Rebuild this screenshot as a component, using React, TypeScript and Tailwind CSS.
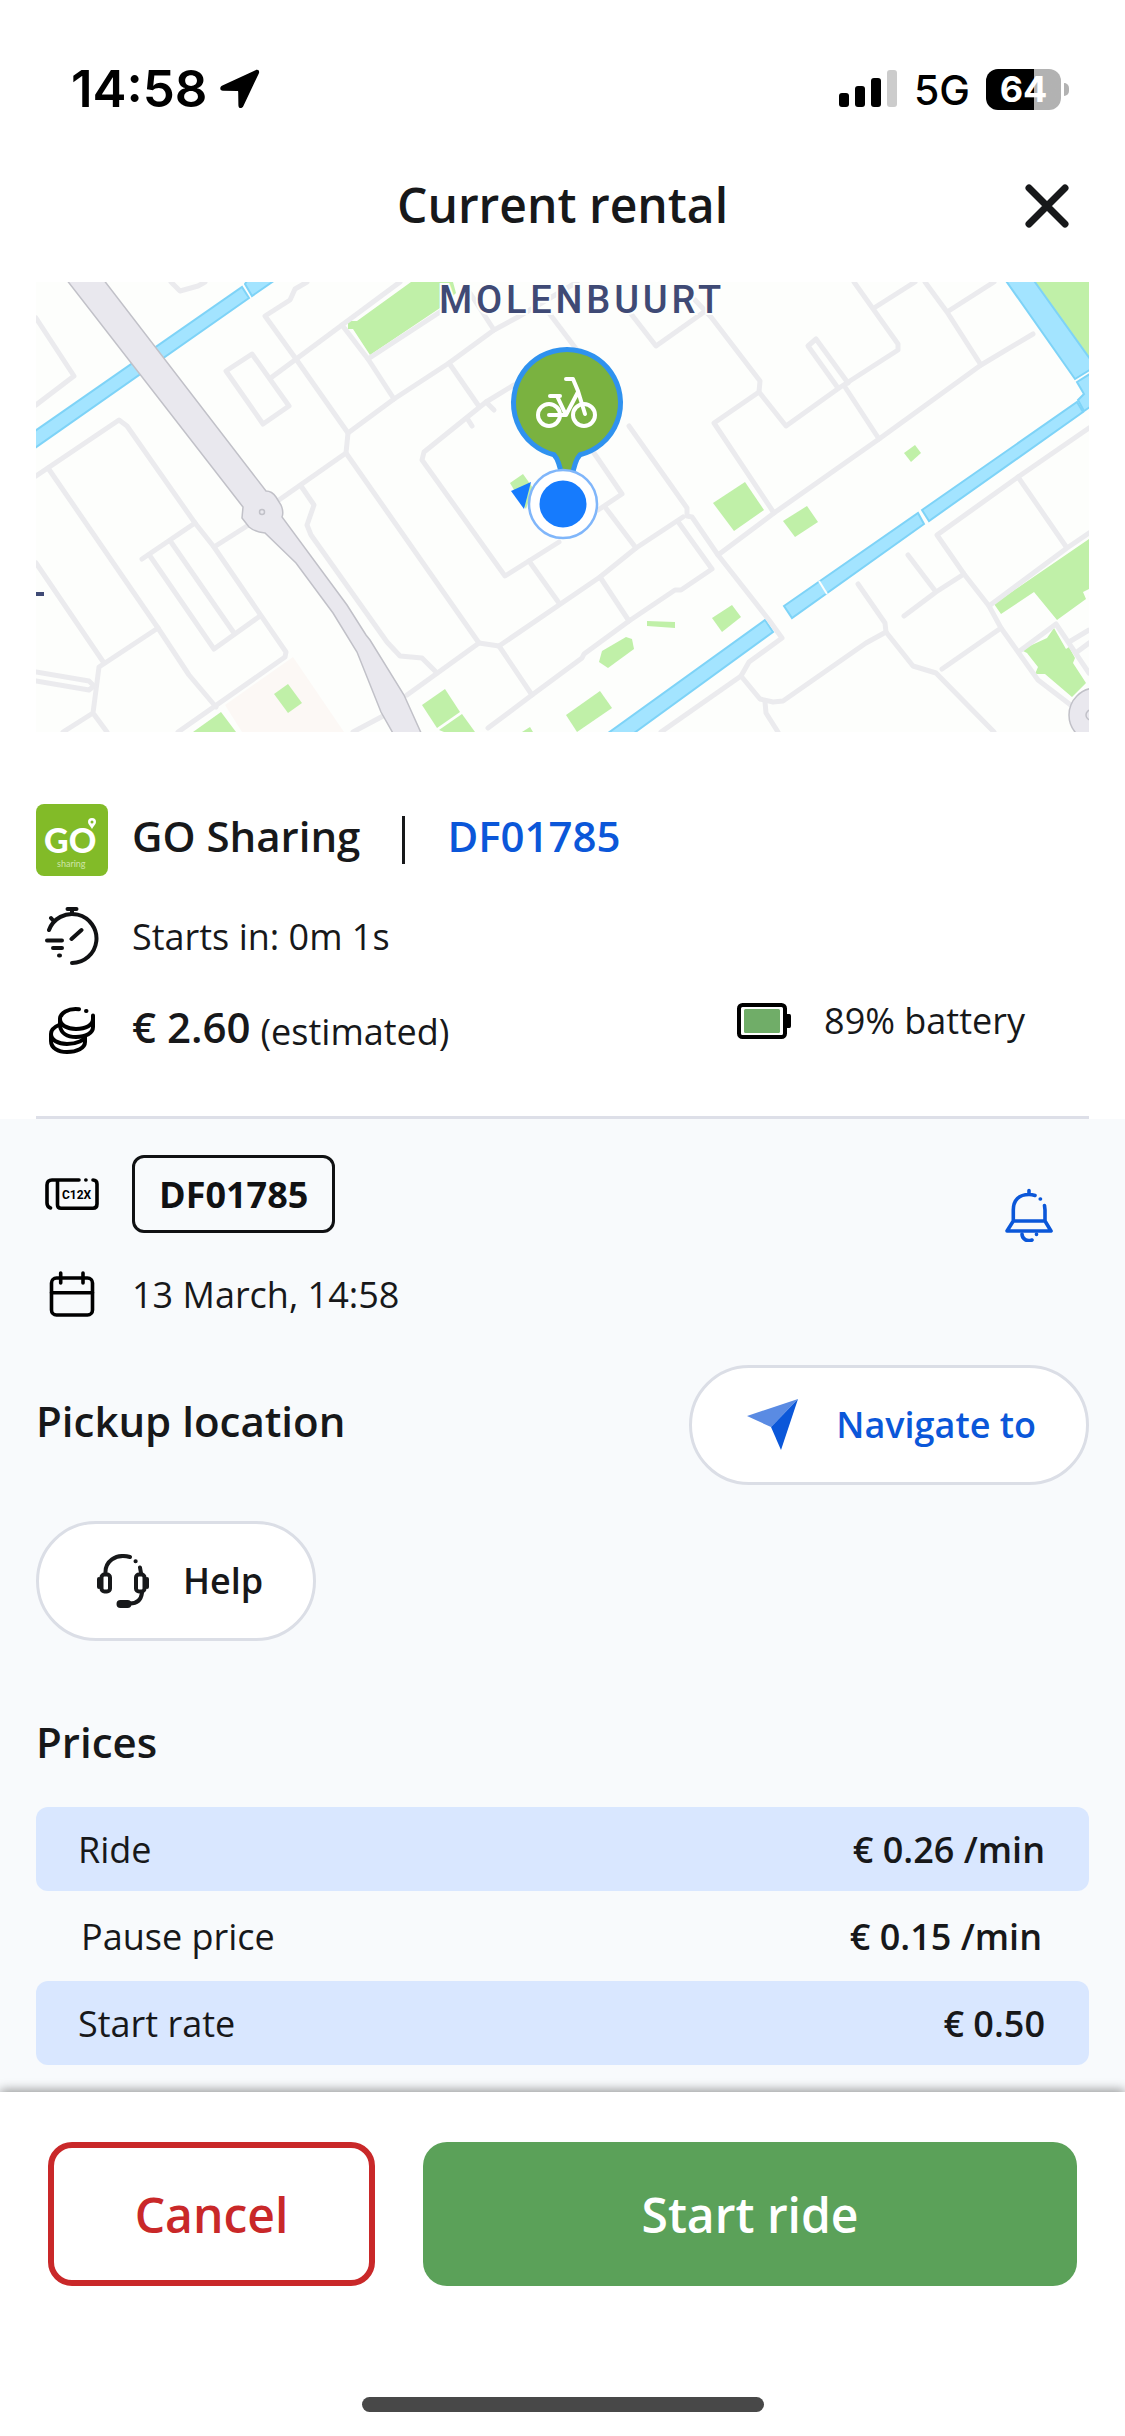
import React from 'react';

const prices = [
  { name: 'Ride', value: '€ 0.26 /min', highlighted: true },
  { name: 'Pause price', value: '€ 0.15 /min', highlighted: false },
  { name: 'Start rate', value: '€ 0.50', highlighted: true },
];

const parks = [
  '375,0 417,0 420,11 404,26 334,73 317,47 312,47 312,39 321,39',
  '252,402 266,421 252,431 238,412',
  '185,430 200,450 157,450',
  '409,407 424,430 401,446 386,423',
  '426,432 439,450 408,450 403,448',
  '494,445 497,450 486,450',
  '709,200 728,228 698,249 677,221',
  '771,224 782,240 759,255 747,239',
  '879,163 885,171 875,180 868,171',
  '696,323 705,335 686,350 676,336',
  '611,339 639,340 639,346 611,344',
  '590,355 596,357 598,367 572,386 563,380 566,369',
  '564,409 576,426 541,450 530,433',
  '998,0 1053,0 1053,76',
  '1053,257 1053,307 1047,310 1050,317 1021,338 998,310 965,332 958,322',
  '1018,346 1030,367 1033,365 1039,376 1037,381 1050,401 1036,415 1009,392 999,392 1002,385 991,371 985,368 1011,356',
  '474,201 487,192 497,206 490,227 484,218',
];

const canals = [
  '-4,151 206,5 213,16 -4,168',
  '209,2 213,-4 242,-4 216,14',
  '729,338 737,350 594,454 568,454',
  '748,324 882,231 888,242 756,336',
  '886,228 1041,120 1047,130 893,239',
  '1042,118 1048,112 1041,100 1057,90 1057,123 1048,129',
  '968,-4 996,-4 1057,81 1057,86 1039,97',
];

const streets = [
  'M0 36 38 94 0 123',
  'M135 0 144 9 162 4 169 0',
  'M0 194 83 138 91 144 159 241 178 265 250 370 249 375 142 450',
  'M12 186 122 346 153 393 180 425',
  'M159 241 106 277',
  'M114 274 178 367 224 334',
  'M135 260 198 351',
  'M178 265 211 244',
  'M0 281 68 381',
  'M122 346 63 385 57 431 27 450M57 431 71 450',
  'M0 390 53 399 58 404 53 408 0 399',
  'M271 0 259 7 254 18 229 34 260 77 312 151 310 171 443 361 371 413',
  'M364 0 306 43 236 95',
  'M216 72 190 89 227 142 253 124Z',
  'M306 43 332 77 358 117',
  'M332 77 404 30',
  'M312 151 358 117 413 81 458 48 482 35 541 0',
  'M458 48 434 11',
  'M413 81 442 123',
  'M478 103 450 120 388 170 386 178 469 294 523 260',
  'M450 120 458 128M431 136 436 144',
  'M310 171 243 218',
  'M265 204 278 223 271 243 275 253 351 360 364 374 386 376 401 391',
  'M443 361 463 364 564 295 600 266 647 235',
  'M463 364 496 413',
  'M452 446 496 413 546 376 548 372 593 339 639 308 645 308 676 287 643 241',
  'M493 279 523 321',
  'M513 31 541 68',
  'M317 450 349 433',
  'M592 28 620 64 668 30',
  'M659 18 675 35 724 99 723 110 750 144 803 106 862 68 862 62 818 0',
  'M723 110 678 141 738 231',
  'M802 106 772 64 780 57 812 101',
  'M809 105 843 157',
  'M838 26 879 0',
  'M889 0 911 30 945 83M911 30 958 0',
  'M997 52 945 83 843 157 738 231 682 273',
  'M593 144 651 226 651 234 656 235 682 273 733 338 746 356 713 380 705 394 724 417 737 420 747 419 830 361 850 350',
  'M705 394 625 450',
  'M729 420 730 431 742 450',
  'M822 302 849 341 850 350 877 384 900 391 958 450',
  'M872 273 900 310M868 334 900 310 928 292',
  'M1053 146 982 195 901 253 928 292 953 324 965 346 1002 398 1036 424',
  'M982 195 1031 266M1053 251 1031 266 953 324',
  'M965 346 906 387',
  'M985 368 1020 342 1053 391M1033 360 1053 348M1041 370 1053 361',
  'M558 171 586 212 562 228M569 225 600 266',
  'M564 295 593 339',
];

export default function App() {
  return (
    <div className="flex min-h-screen flex-col bg-white font-['Open_Sans','Noto_Sans',sans-serif] text-[36px] leading-[48px] text-[#17181a]">
      <StatusBar />

      {/* Title bar */}
      <header className="grid h-[157px] grid-cols-[1fr_auto_1fr] items-center px-9">
        <h1 className="col-start-2 pt-[2px] text-[48px] leading-[64px] font-semibold">Current rental</h1>
        <button type="button" aria-label="Close" className="mr-5 justify-self-end pt-1">
          <svg width="44" height="44" viewBox="0 0 44 44" fill="none" stroke="currentColor" strokeWidth="7" strokeLinecap="round">
            <path d="M4 4 40 40M40 4 4 40" />
          </svg>
        </button>
      </header>

      <main className="flex flex-1 flex-col">
        <section className="px-9">
          <RentalMap />

          {/* Provider */}
          <div className="mt-[72px] flex items-center">
            <GoLogo />
            <h2 className="ml-6 pb-2 text-[42px] leading-[60px] font-semibold">GO Sharing</h2>
            <div className="mx-[42px] h-12 w-[3px] bg-[#17181a]" />
            <a href="#vehicle" className="pb-2 text-[42px] leading-[60px] font-semibold text-[#0b57d9]">DF01785</a>
          </div>

          <div className="mt-[30px] flex h-[60px] items-center gap-6">
            <IconSlot><StopwatchIcon /></IconSlot>
            <p className="pt-[2px]">Starts in: 0m 1s</p>
          </div>

          <div className="mt-[35px] flex h-[60px] items-center gap-6">
            <IconSlot><CoinsIcon /></IconSlot>
            <p className="flex items-center gap-[10px]">
              <strong className="pb-2 text-[42px] leading-[60px] font-semibold">€ 2.60</strong>
              <span className="pt-[2px]">(estimated)</span>
            </p>
            <p className="mr-16 ml-auto flex h-10 items-center gap-8 self-start">
              <BatteryIcon />
              <span>89% battery</span>
            </p>
          </div>

          <hr className="mt-[55px] border-t-[3px] border-[#dddfe8]" />
        </section>

        <section className="flex-1 bg-[#f8fafc] px-9 pt-9 pb-6">
          {/* Reservation */}
          <div className="flex items-start justify-between">
            <div className="flex flex-col gap-9">
              <div className="flex items-center gap-6">
                <IconSlot><PlateIcon /></IconSlot>
                <p className="flex h-[78px] items-center rounded-xl border-[3px] border-[#101113] px-6 pt-[2px] font-bold text-[#101113]">DF01785</p>
              </div>
              <div className="flex items-center gap-6">
                <IconSlot><CalendarIcon /></IconSlot>
                <p className="pt-[2px]">13 March, 14:58</p>
              </div>
            </div>
            <button type="button" aria-label="Notifications" className="mt-[33px] mr-9 text-[#0b57d9]">
              <BellIcon />
            </button>
          </div>

          <div className="mt-[46px] flex items-center justify-between">
            <h2 className="pb-2 text-[42px] leading-[60px] font-semibold">Pickup location</h2>
            <button type="button" className="flex h-[120px] items-center gap-[34px] rounded-full border-[3px] border-[#dbdee6] bg-white px-[50px] font-semibold text-[#0b57d9]">
              <NavigateIcon />
              Navigate to
            </button>
          </div>

          <button type="button" className="mt-9 flex h-[120px] items-center gap-[34px] rounded-full border-[3px] border-[#dbdee6] bg-white px-[50px] font-semibold">
            <HeadsetIcon />
            Help
          </button>

          {/* Prices */}
          <h2 id="prices" className="mt-[71px] text-[42px] leading-[60px] font-semibold">Prices</h2>
          <table aria-labelledby="prices" className="mt-8 w-full border-separate border-spacing-x-0 border-spacing-y-[3px]">
            <tbody>
              {prices.map((price) => (
                <PriceRow key={price.name} {...price} />
              ))}
            </tbody>
          </table>
        </section>
      </main>

      <footer className="relative bg-white px-12 pt-[50px] pb-6 shadow-[0_-2px_10px_rgba(0,0,0,0.4)]">
        <div className="grid grid-cols-[1fr_2fr] gap-12 text-[48px] leading-[64px] font-semibold">
          <button type="button" className="h-36 rounded-3xl border-[6px] border-[#c92829] pt-[2px] text-[#c92829]">Cancel</button>
          <button type="button" className="h-36 rounded-3xl bg-[#5ba159] pt-[2px] text-white">Start ride</button>
        </div>
        <div className="mx-auto mt-[111px] h-[15px] w-[402px] rounded-full bg-[#484848]" />
      </footer>
    </div>
  );
}

// Helper components
function StatusBar() {
  return (
    <div className="flex items-center justify-between pt-[53px] pr-14 pl-[71px] font-['Inter',sans-serif] text-black">
      <div className="flex h-[72px] items-center gap-3">
        <span className="text-[51px] leading-[60px] font-semibold">14:58</span>
        <svg width="40" height="40" viewBox="0 0 40 40">
          <path d="M35.5 1.2 2.4 16.6C-.8 18.2-.2 21.8 3 21.8L17.3 22C18 22 18.2 22.2 18.2 23L18.4 36.2C18.4 39.8 22 40 23.4 37L38.8 4.4C40 1.8 38 0 35.5 1.2Z" />
        </svg>
      </div>
      <div className="flex h-[72px] items-center gap-4">
        <svg width="59" height="38" viewBox="0 0 59 38">
          <rect x="0" y="23" width="10" height="14" rx="3" />
          <rect x="16" y="16" width="10" height="21" rx="3" />
          <rect x="32" y="8" width="10" height="29" rx="3" />
          <rect x="48" y="0" width="10" height="37" rx="3" fill="#cccccc" />
        </svg>
        <span className="pt-[2px] text-[41px] leading-[48px] font-medium">5G</span>
        <div className="flex items-center gap-[3px]">
          <div className="flex h-[41px] w-[75px] items-center justify-center rounded-xl bg-linear-to-r from-black from-64% to-[#b2b2b2] to-64% text-[36px] leading-[40px] font-bold text-white">64</div>
          <div className="h-[13px] w-[5px] rounded-r-full bg-[#b2b2b2]" />
        </div>
      </div>
    </div>
  );
}

function IconSlot({ children }: { children: React.ReactNode }) {
  return <span className="flex w-[72px] shrink-0 justify-center">{children}</span>;
}

function PriceRow({ name, value, highlighted }: { name: string; value: string; highlighted: boolean }) {
  const cell = highlighted ? 'bg-[#d9e7ff] pl-[42px] pr-11' : 'pl-[45px] pr-[47px]';
  return (
    <tr>
      <th scope="row" className={`h-[84px] rounded-l-xl pt-[2px] pb-0 text-left font-normal ${cell}`}>{name}</th>
      <td className={`h-[84px] rounded-r-xl pt-[2px] pb-0 text-right font-semibold ${cell}`}>{value}</td>
    </tr>
  );
}

function RentalMap() {
  return (
    <div className="relative">
      <svg viewBox="0 0 1053 450" className="block w-full" role="img" aria-label="Map">
        <rect width="1053" height="450" fill="#fdfefc" />
        <polygon points="257,375 308,450 206,450 189,423" fill="#fcf8f5" />
        {parks.map((points) => <polygon key={points} points={points} fill="#c0f0a8" />)}

        {/* Canals */}
        <g fill="#a3e4ff" stroke="#7ed3f7" strokeWidth="2">
          {canals.map((points) => <polygon key={points} points={points} />)}
        </g>
        <path d="M783 299 791 312" stroke="#fdfefc" strokeWidth="2" />

        <g fill="none" stroke="#ebebee" strokeWidth="5" strokeLinecap="round" strokeLinejoin="round">
          {streets.map((d) => <path key={d} d={d} />)}
        </g>

        {/* Main road with its roundabouts */}
        <path
          d="M30 -3 207 225 206 236 213 245Q219 250 229 251L260 281 297 331 321 370 345 430 358 453H386L368 413 334 358 330 353 311 323 246 235Q248 230 245 223L240 215Q236 209 230 209L67 -3Z"
          fill="#e9e8ee"
          stroke="#c1c1c8"
          strokeWidth="1.5"
        />
        <circle cx="226" cy="230" r="2.5" fill="none" stroke="#c1c1c8" strokeWidth="1.5" />
        <circle cx="1060" cy="433" r="27" fill="#e9e8ee" stroke="#c1c1c8" strokeWidth="1.5" />
        <circle cx="1055" cy="433" r="5" fill="none" stroke="#c1c1c8" strokeWidth="1.5" />
        <rect y="310" width="8" height="4" fill="#3f4a75" />

        {/* Vehicle pin */}
        <path
          d="M544 172.800A53.500 53.500 0 1 0 518 172.800Q523 178 526 195H536Q539 178 544 172.800Z"
          fill="#7ab240"
          stroke="#2f92ef"
          strokeWidth="5"
          strokeLinejoin="round"
        />
        <g fill="none" stroke="#fff" strokeWidth="4" strokeLinecap="round" strokeLinejoin="round">
          <circle cx="513" cy="133" r="11" />
          <circle cx="548" cy="133" r="11" />
          <path d="M513 133H530L542 110M530 97H537L542 109 549 132M514 114H524M521 114 530 133" />
        </g>

        {/* Own position */}
        <polygon points="475,209 495,200 488,227" fill="#167bfd" />
        <circle cx="527" cy="222" r="34" fill="#fff" stroke="#80b6fa" strokeWidth="2.5" />
        <circle cx="527" cy="222" r="23.5" fill="#167bfd" />
      </svg>

      <div className="absolute inset-x-0 top-0 pl-[403px] font-['Roboto',sans-serif] text-[38px] leading-[36px] font-medium tracking-widest text-[#3f4a75] [-webkit-text-stroke:4px_#fdfefc] [paint-order:stroke]">
        MOLENBUURT
      </div>
    </div>
  );
}

function GoLogo() {
  return (
    <svg width="72" height="72" viewBox="0 0 72 72" role="img" aria-label="GO Sharing">
      <rect width="72" height="72" rx="8" fill="#82bb28" />
      <text x="8" y="49" className="font-['Lato',sans-serif] text-[34px] font-black" fill="#fff">GO</text>
      <text x="21" y="63" className="font-['Lato',sans-serif] text-[9px]" fill="#cfe6a9">sharing</text>
      <path d="M56 14A4 4 0 0 1 60 18C60 20.500 57.500 22 56 25 54.500 22 52 20.500 52 18A4 4 0 0 1 56 14ZM56 16.500A1.500 1.500 0 1 0 56 19.500 1.500 1.500 0 1 0 56 16.500Z" fill="#fff" fillRule="evenodd" />
    </svg>
  );
}

function StopwatchIcon() {
  return (
    <svg width="54" height="60" viewBox="0 0 54 60" fill="none" stroke="#101113" strokeWidth="4" strokeLinecap="round">
      <path d="M22.500 3H31.500M27 3V8M4 24A24.500 24.500 0 1 1 27 57M6 12 9 15.500M26.500 33 36.500 24M2 34.500H17M8 42H17M14 49.500H15" />
    </svg>
  );
}

function CoinsIcon() {
  return (
    <svg width="46" height="48" viewBox="0 0 46 48" fill="none" stroke="#000" strokeWidth="4" strokeLinecap="round">
      <path d="M30 2.200C19 1 11 6 11 12 11 18 18 22 27 22 37 22 44 18 44 12V8.500M11 12V19C12 26 18 30 27 30 37 30 44 26 44 20V12M37 4H37.500" />
      <path d="M10 18C5 20 2 23 2 27 2 33 9 37 18 37 28 37 36 33 36 29M2 27V34C2 41 9 45 18 45 28 45 36 41 36 35V29" />
    </svg>
  );
}

function BatteryIcon() {
  return (
    <svg width="56" height="36" viewBox="0 0 56 36">
      <rect x="3" y="2" width="46" height="32" rx="3.500" fill="none" stroke="#000" strokeWidth="4" />
      <rect x="8" y="6" width="36" height="24" rx="1.500" fill="#70ad68" />
      <path d="M50 11H53.500Q55 11 55 13V23Q55 25 53.500 25H50Z" />
    </svg>
  );
}

function PlateIcon() {
  return (
    <svg width="54" height="32" viewBox="0 0 54 32">
      <path
        d="M5.500 30Q2 29 2 25V7Q2 2 7 2H34M12.500 2V27Q12.500 30.200 16 30.200H48Q52 30.200 52 26V6Q52 2 48 2M40.800 2H41"
        fill="none"
        stroke="#000"
        strokeWidth="3.6"
        strokeLinecap="round"
      />
      <text x="17" y="21" className="font-['Roboto',sans-serif] text-[12px] font-bold">C12X</text>
    </svg>
  );
}

function CalendarIcon() {
  return (
    <svg width="48" height="48" viewBox="0 0 48 48" fill="none" stroke="#000" strokeWidth="3.6" strokeLinecap="round">
      <rect x="3.500" y="8" width="41" height="37" rx="5" />
      <path d="M12.700 3V13M35 3V13M3.500 22.700H44.500" />
    </svg>
  );
}

function BellIcon() {
  return (
    <svg width="48" height="54" viewBox="0 0 48 54" fill="none" stroke="currentColor" strokeWidth="3.6" strokeLinecap="round" strokeLinejoin="round">
      <path d="M8.300 33V22C8.300 12 14 6.500 24 6.500Q27 6.500 30 7.500M39.500 17.500 40 22V33L46 43H2L8.300 33H40M24 2.500V6M35.200 11H35.500" />
      <path d="M17 46C17 51 22 54 27 52M31.500 46V46.500" />
    </svg>
  );
}

function NavigateIcon() {
  return (
    <svg width="60" height="52" viewBox="-5 0 60 52">
      <polygon points="0,17 51,0 24,28" fill="#5a8be3" />
      <polygon points="51,0 34,51 24,28" fill="#0b57d9" />
    </svg>
  );
}

function HeadsetIcon() {
  return (
    <svg width="60" height="54" viewBox="-7 0 60 54" fill="none" stroke="#17181a" strokeWidth="4" strokeLinecap="round">
      <rect x="5.500" y="20.500" width="8.500" height="17" rx="3" />
      <rect x="40" y="20.500" width="8.500" height="17" rx="3" />
      <path d="M3 25V33M51 25V33M9.500 19C9 8 19-1 34 3M44 13.500 45 19M39.500 7.300H39.700M46 39C45 46 41 49.500 34 49.500" />
      <rect x="22.500" y="48" width="11" height="4" rx="2" fill="#17181a" />
    </svg>
  );
}
